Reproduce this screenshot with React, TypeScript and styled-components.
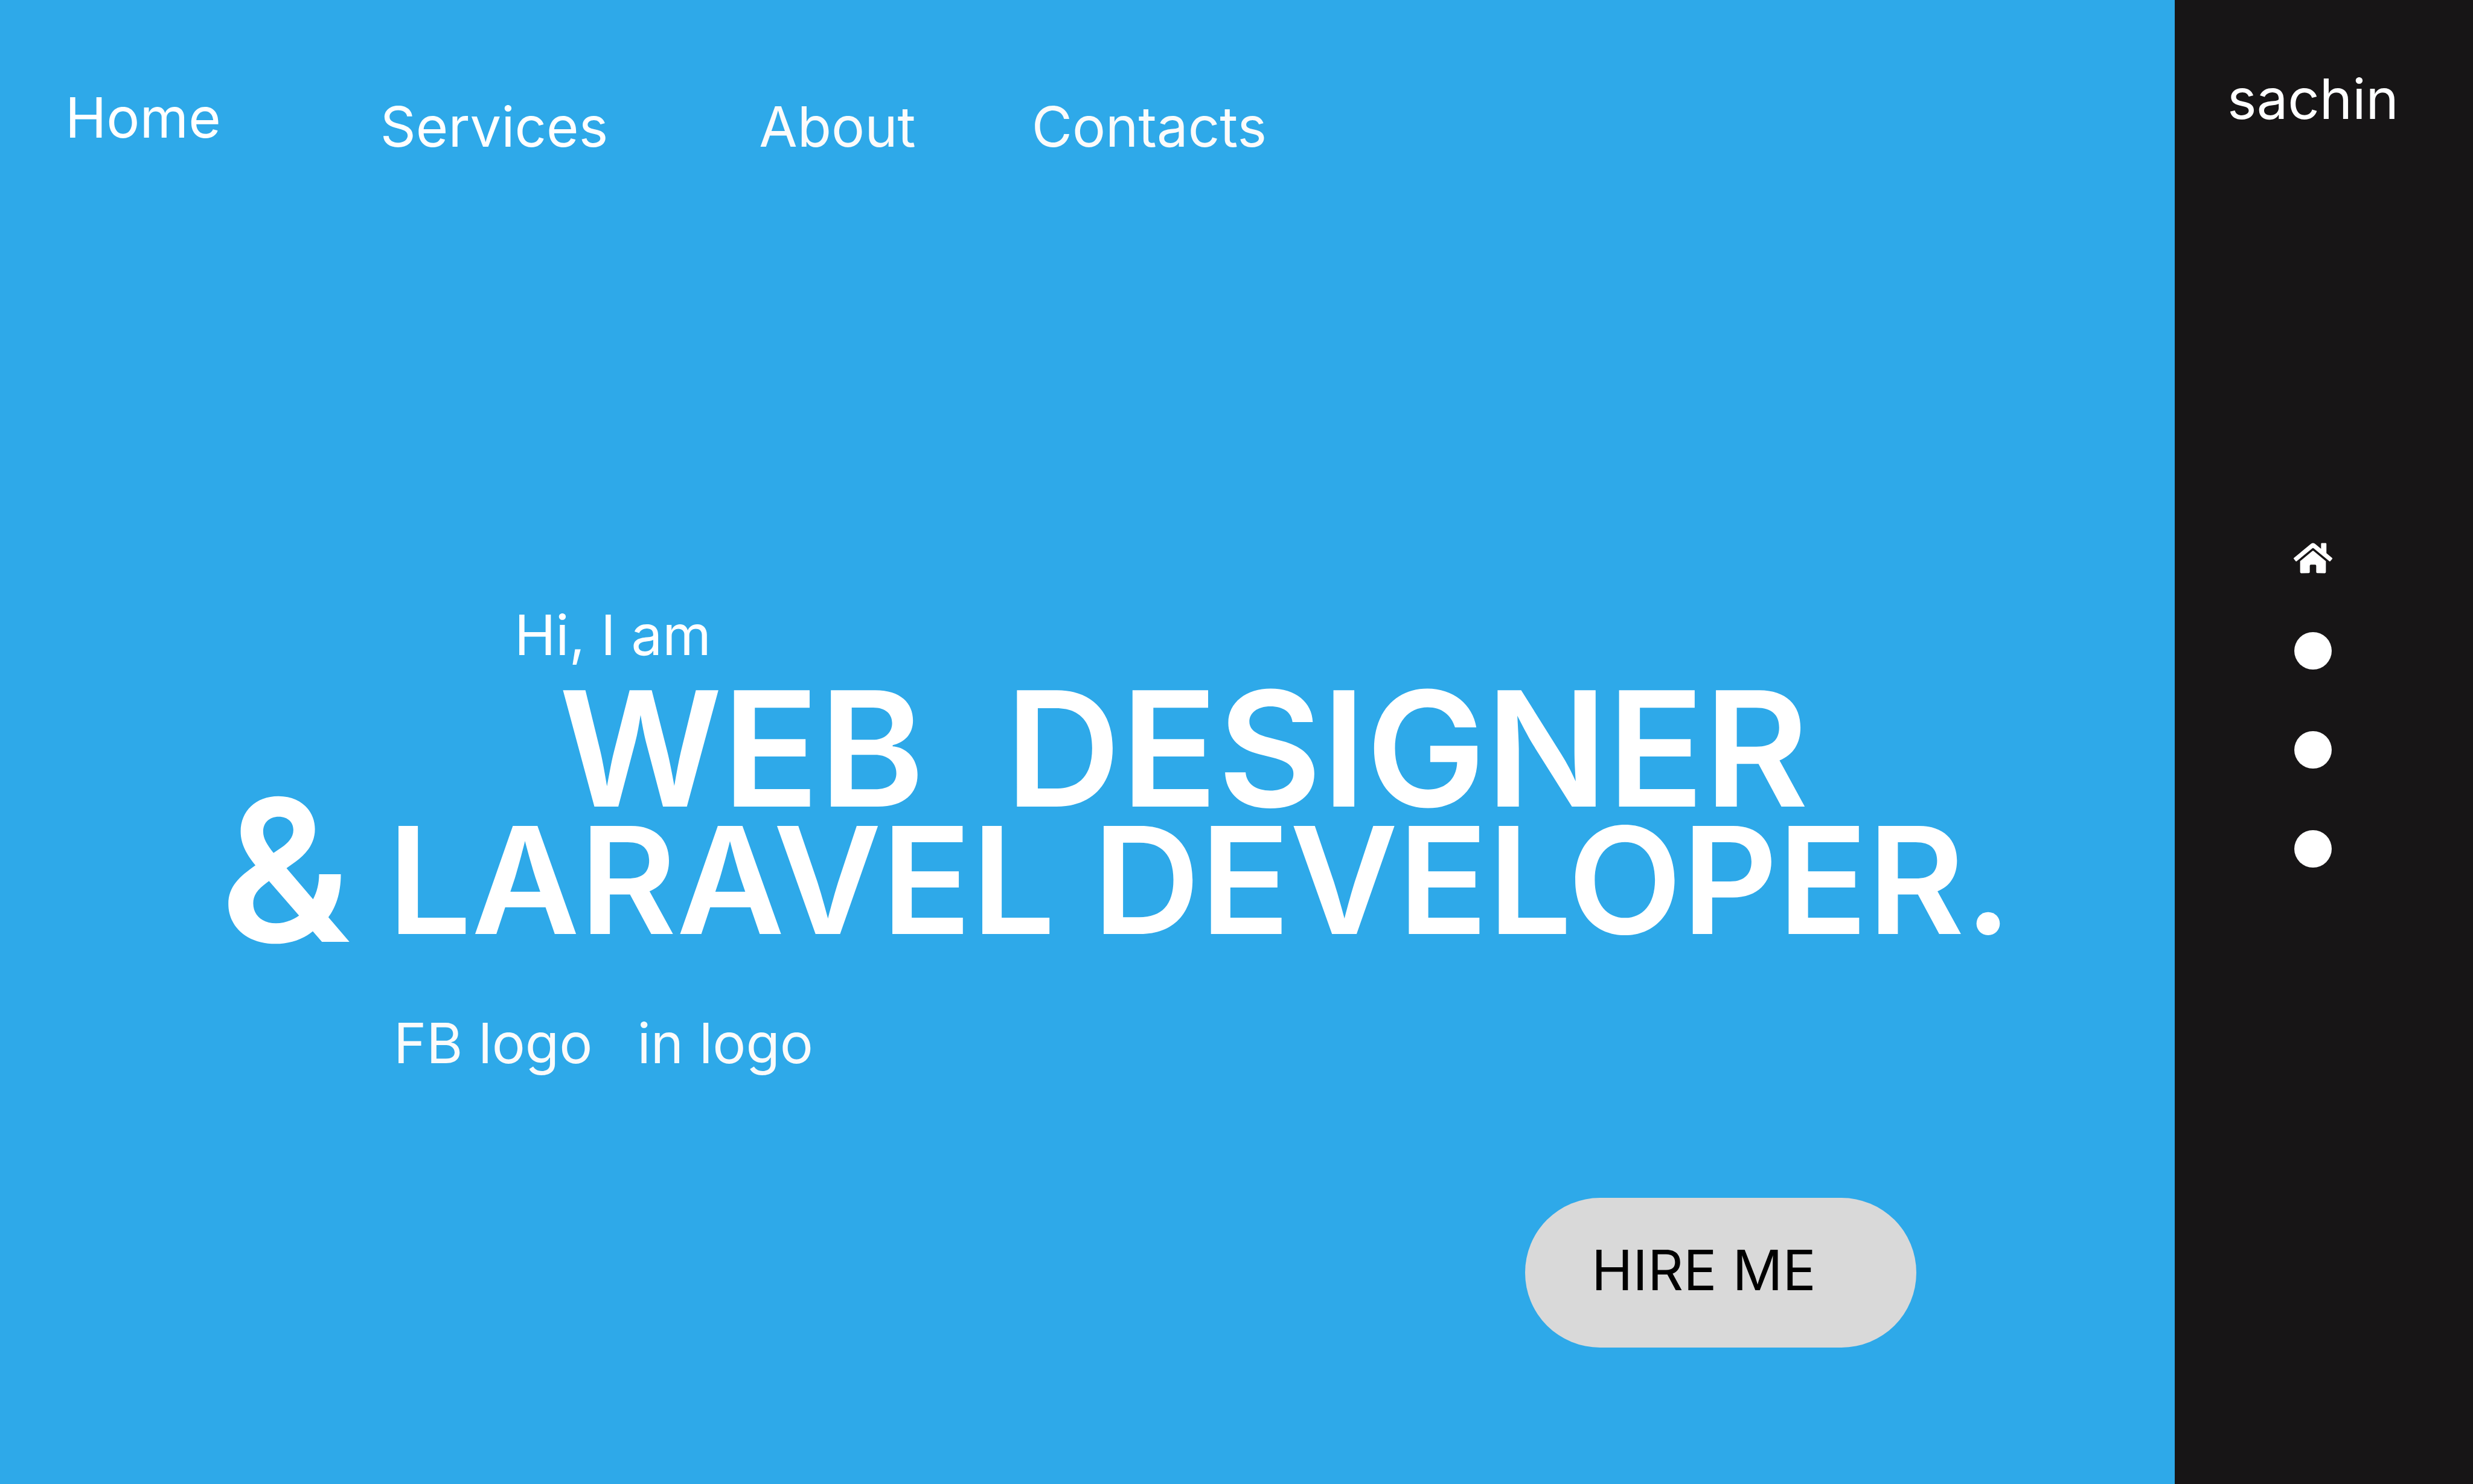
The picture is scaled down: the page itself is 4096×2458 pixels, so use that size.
import React from "react";
import styled, { createGlobalStyle } from "styled-components";
import { FaHome } from "react-icons/fa";

const GlobalStyle = createGlobalStyle`
  *, *::before, *::after { box-sizing: border-box; }
  body {
    margin: 0;
    background: #2ea9e9;
    font-family: Inter, "Liberation Sans", sans-serif;
    font-size: 92px;
    line-height: 112px;
    color: #ffffff;
  }
`;

const Page = styled.div`
  display: flex;
  min-height: 100vh;
`;

const Main = styled.main`
  flex: 1;
  min-width: 0;
  display: flex;
  flex-direction: column;
  padding: 139px 428px 0 108px;
`;

const Nav = styled.nav`
  display: flex;
  align-items: flex-start;
`;

const NavGroup = styled.div`
  display: flex;
  padding-top: 15px;
  margin-left: 264px;
`;

const NavLink = styled.a<{ $soft?: boolean; $gap?: number }>`
  color: ${(p) => (p.$soft ? "#fbfbfb" : "#ffffff")};
  margin-left: ${(p) => p.$gap ?? 0}px;
  text-decoration: none;
  white-space: nowrap;
`;

const Hero = styled.section`
  display: grid;
  grid-template-columns: 278px 1fr;
  margin-top: 730px;
  padding-left: 256px;
`;

const Greeting = styled.p`
  grid-column: 2;
  margin: 0 0 20px;
  padding-left: 210px;
`;

const Ampersand = styled.span`
  grid-column: 1;
  align-self: end;
  font-size: 328px;
  line-height: 246px;
  font-weight: 600;
`;

const Title = styled.h1`
  grid-column: 2;
  margin: 0;
  font-weight: 600;
  white-space: pre;
`;

const Role = styled.span<{ $size: number; $line: number; $indent?: number }>`
  display: block;
  font-size: ${(p) => p.$size}px;
  line-height: ${(p) => p.$line}px;
  padding-left: ${(p) => p.$indent ?? 0}px;
`;

const Socials = styled.div`
  grid-column: 2;
  display: flex;
  gap: 74px;
  margin-top: 108px;
  padding-left: 10px;
`;

const HireButton = styled.button`
  align-self: flex-end;
  width: 648px;
  height: 248px;
  margin-top: 200px;
  padding: 0 0 8px 110px;
  border: 0;
  border-radius: 124px;
  background: #d9d9d9;
  color: #000000;
  font: inherit;
  text-align: left;
  cursor: pointer;
`;

const Sidebar = styled.aside`
  flex: 0 0 494px;
  display: flex;
  flex-direction: column;
  align-items: center;
  padding: 108px 36px 0 0;
  background: #171516;
`;

const Brand = styled.div``;

const Pager = styled.nav`
  display: flex;
  flex-direction: column;
  align-items: center;
  gap: 102px;
  margin-top: 684px;
`;

const HomeDot = styled.a`
  height: 41px;
  display: flex;
  align-items: center;
  color: #ffffff;

  svg {
    width: 64px;
    height: 57px;
  }
`;

const Dot = styled.button`
  width: 62px;
  height: 62px;
  padding: 0;
  border: 0;
  border-radius: 50%;
  background: #ffffff;
  cursor: pointer;
`;

export default function App() {
  return (
    <>
      <GlobalStyle />
      <Page>
        <Main>
          <Nav>
            <NavLink href="#home">Home</NavLink>
            <NavGroup>
              <NavLink href="#services">Services</NavLink>
              <NavLink href="#about" $soft $gap={250}>About</NavLink>
              <NavLink href="#contacts" $soft $gap={192}>Contacts</NavLink>
            </NavGroup>
          </Nav>
          <Hero>
            <Greeting>Hi, I am</Greeting>
            <Ampersand>&amp;</Ampersand>
            <Title>
              <Role $size={265} $line={224} $indent={284}>{"WEB  DESIGNER"}</Role>
              <Role $size={246} $line={212}>LARAVEL DEVELOPER.</Role>
            </Title>
            <Socials>
              <NavLink href="#facebook" $soft>FB logo</NavLink>
              <NavLink href="#linkedin" $soft>in logo</NavLink>
            </Socials>
          </Hero>
          <HireButton type="button">HIRE ME</HireButton>
        </Main>
        <Sidebar>
          <Brand>sachin</Brand>
          <Pager aria-label="Sections">
            <HomeDot href="#home" aria-label="Home">
              <FaHome />
            </HomeDot>
            <Dot type="button" aria-label="Services" />
            <Dot type="button" aria-label="About" />
            <Dot type="button" aria-label="Contacts" />
          </Pager>
        </Sidebar>
      </Page>
    </>
  );
}
